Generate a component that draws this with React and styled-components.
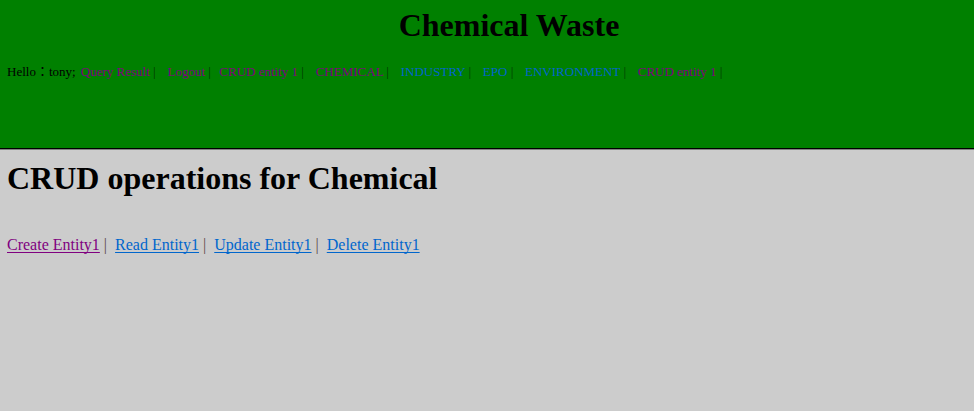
import React from "react";
import styled, { createGlobalStyle } from "styled-components";

const GlobalStyle = createGlobalStyle`
  html { background: #cccccc; }
  body {
    margin: 0;
    color: #000;
    font-family: "Liberation Serif", "Noto Sans CJK JP", serif;
    font-size: 16px;
  }
`;

const Header = styled.header`
  box-sizing: border-box;
  min-height: 149px;
  padding: 7px 7px 6px;
  background: #008000;
  border-bottom: 1px solid #000;
`;

const SiteTitle = styled.h1`
  margin: 0 0 19px;
  padding-left: 44px;
  font-size: 32px;
  line-height: 37px;
  text-align: center;
`;

const SiteNav = styled.nav`
  display: flex;
  flex-wrap: wrap;
  column-gap: 2px;
  font-size: 13px;
  line-height: 18px;
  white-space: pre;
`;

const Main = styled.main`
  padding: 10px 7px;
  border-top: 1px solid #808080;
`;

const PageTitle = styled.h1`
  margin: 0 0 39px;
  font-size: 32px;
  line-height: 37px;
`;

const Operations = styled.nav`
  display: flex;
  flex-wrap: wrap;
  line-height: 18px;
  white-space: pre;
`;

const NavLink = styled.a`
  color: ${({ $visited }) => ($visited ? "#800080" : "#0066cc")};
  text-decoration: none;
`;

const OperationLink = styled(NavLink)`
  text-decoration: underline;
  text-decoration-skip-ink: none;
  text-underline-offset: 2px;
`;

const Separator = styled.span`
  color: ${({ $onGreen }) => ($onGreen ? "#003800" : "#5c4a4a")};
`;

const siteLinks = [
  ["Query Result", true, " |   "],
  ["Logout", true, " |  "],
  ["CRUD entity 1", true, " |   "],
  ["CHEMICAL", true, " |   "],
  ["INDUSTRY", false, " |   "],
  ["EPO", false, " |   "],
  ["ENVIRONMENT", false, " |   "],
  ["CRUD entity 1", true, " |"],
];

const operations = [
  ["Create Entity1", true, " |  "],
  ["Read Entity1", false, " |  "],
  ["Update Entity1", false, " |  "],
  ["Delete Entity1", false, ""],
];

export default function App() {
  return (
    <>
      <GlobalStyle />
      <Header>
        <SiteTitle>Chemical Waste</SiteTitle>
        <SiteNav>
          <span>Hello：tony; </span>
          {siteLinks.map(([label, visited, after], i) => (
            <span key={i}>
              <NavLink href="#" $visited={visited}>{label}</NavLink>
              <Separator $onGreen>{after}</Separator>
            </span>
          ))}
        </SiteNav>
      </Header>
      <Main>
        <PageTitle>CRUD operations for Chemical</PageTitle>
        <Operations>
          {operations.map(([label, visited, after]) => (
            <span key={label}>
              <OperationLink href="#" $visited={visited}>{label}</OperationLink>
              <Separator>{after}</Separator>
            </span>
          ))}
        </Operations>
      </Main>
    </>
  );
}
